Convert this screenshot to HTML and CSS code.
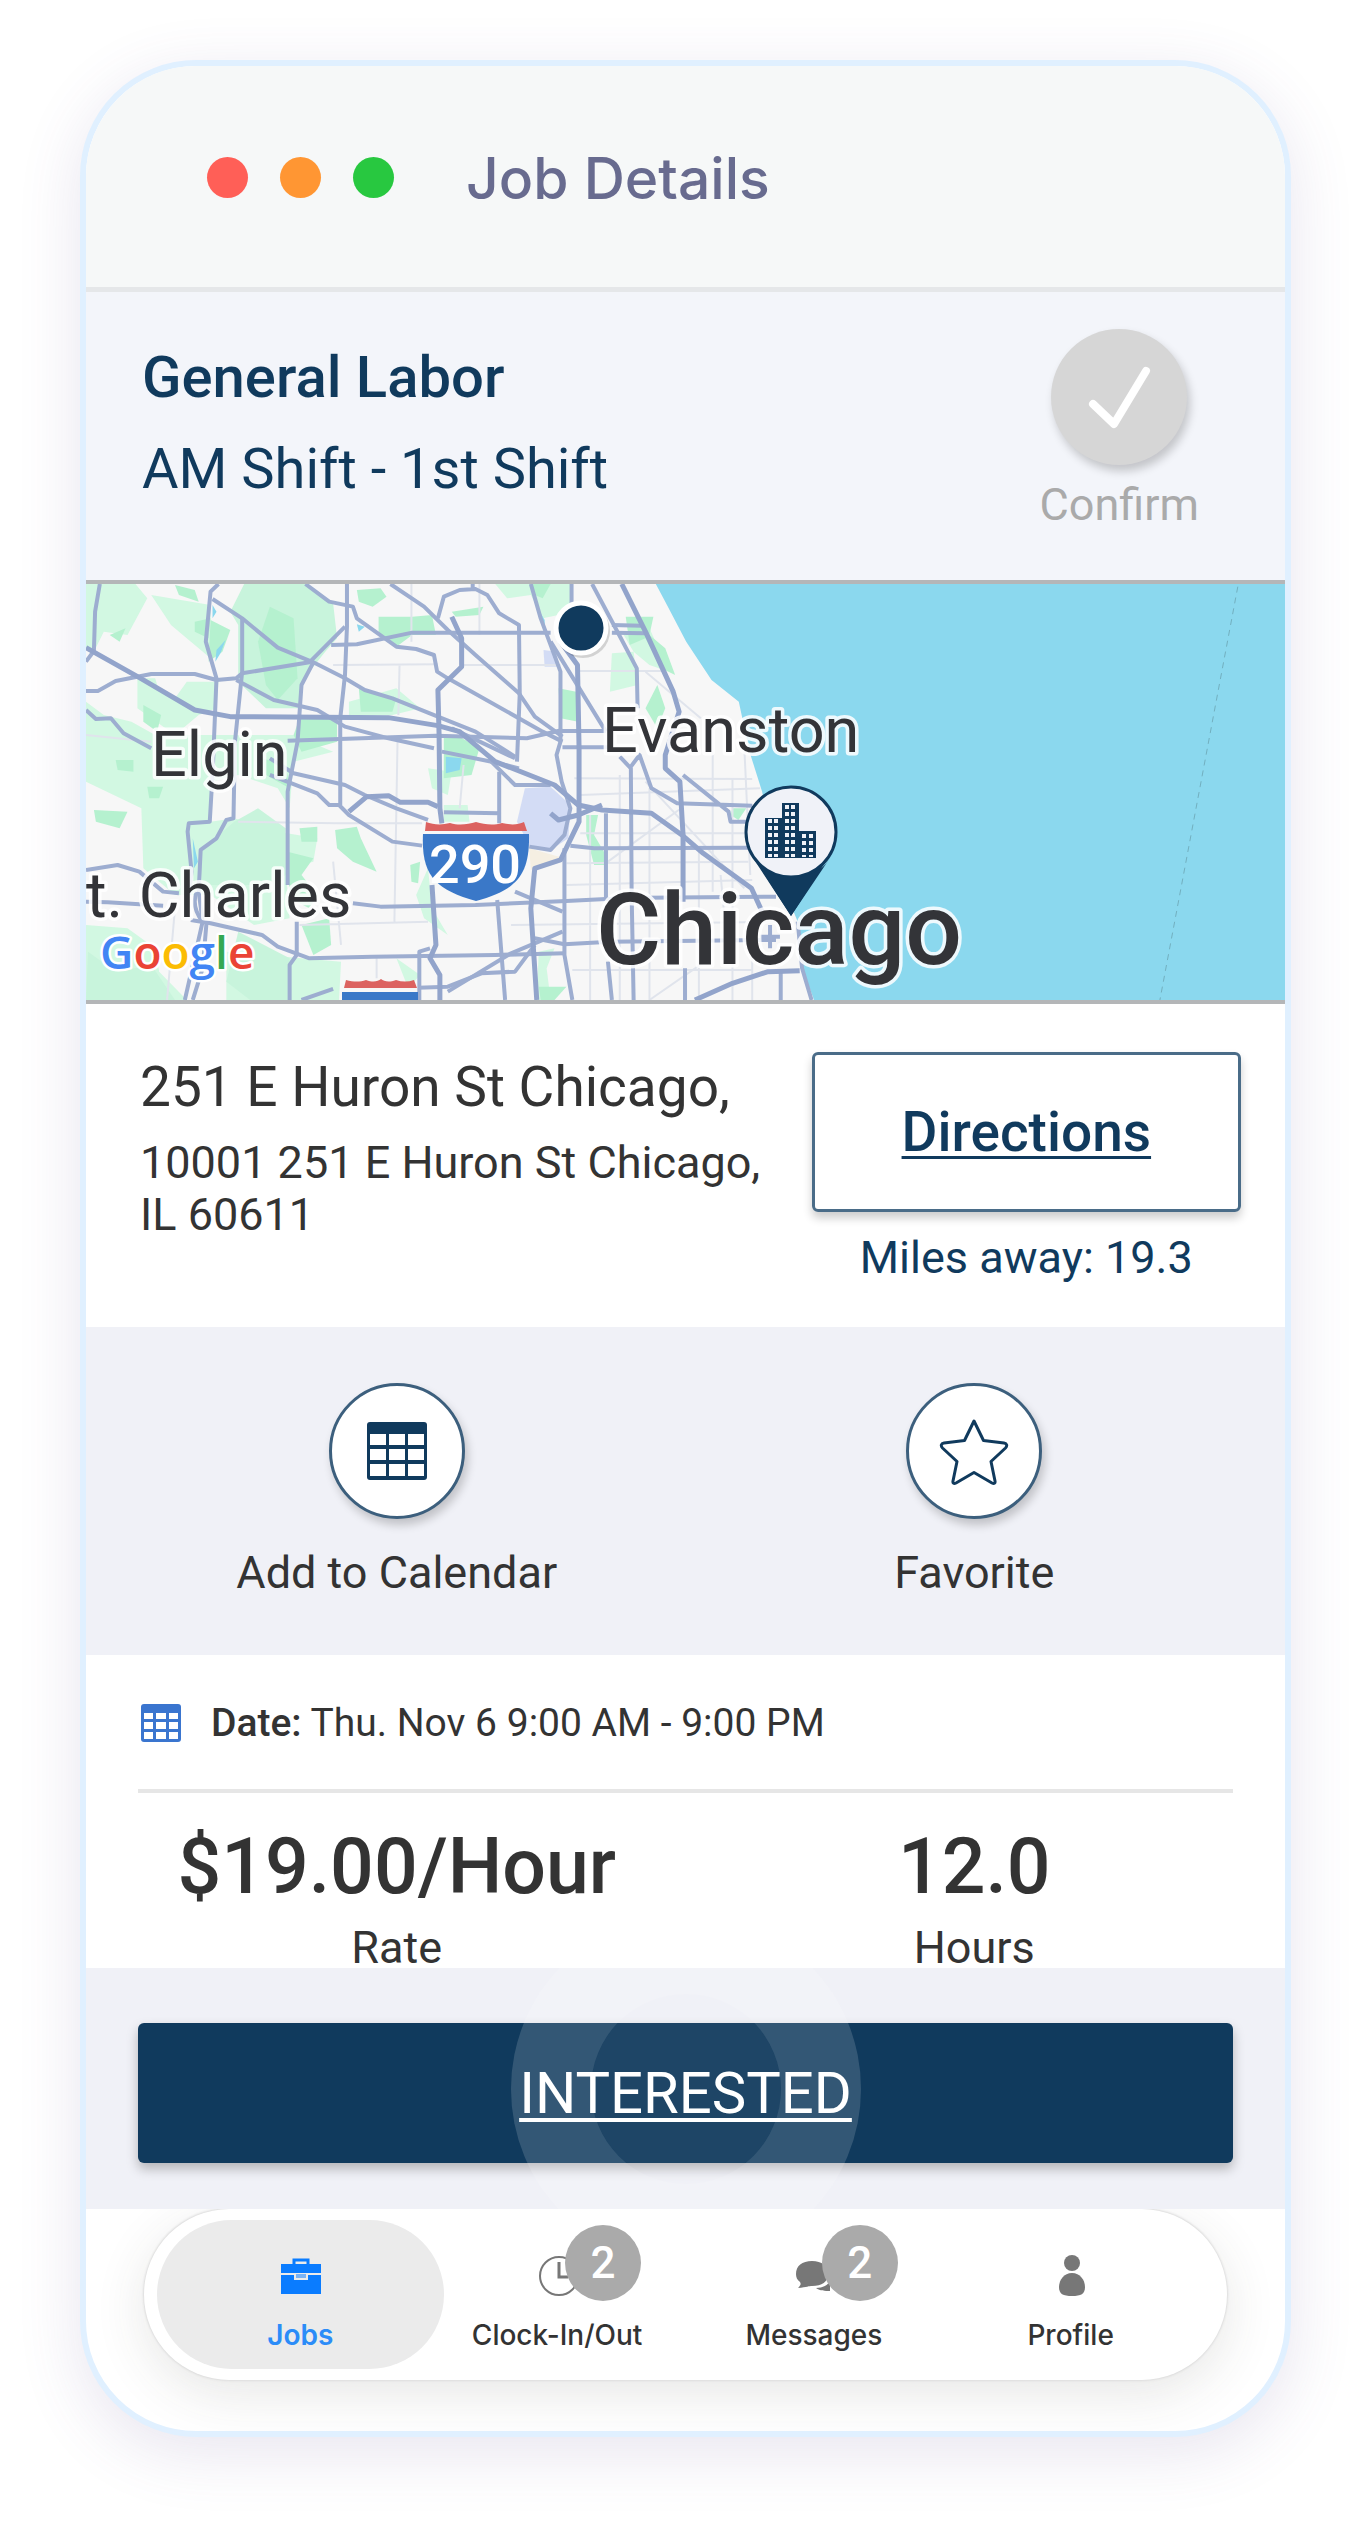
FILE: index.html
```html
<!DOCTYPE html>
<html lang="en">
<head>
    <meta charset="UTF-8">
    <meta name="viewport" content="width=device-width, initial-scale=1.0">
    <title>Job Details</title>
    <link rel="stylesheet" href="styles.css">
</head>
<body>
    <main class="phone">
        <header class="title-bar">
            <div class="dots">
                <span class="dot red"></span>
                <span class="dot orange"></span>
                <span class="dot green"></span>
            </div>
            <h1>Job Details</h1>
        </header>

        <section class="job-header">
            <div class="job-name">
                <h2>General Labor</h2>
                <p>AM Shift - 1st Shift</p>
            </div>
            <button class="round-action confirm">
                <span class="circle">
                    <svg width="136" height="136" viewBox="0 0 136 136"><path d="M42 75L63 95L95 42" fill="none" stroke="#fff" stroke-width="8" stroke-linecap="round" stroke-linejoin="round"/></svg>
                </span>
                <span>Confirm</span>
            </button>
        </section>

        <section class="map">
            <svg viewBox="0 0 1199 416" preserveAspectRatio="xMidYMid slice" role="img" aria-label="Map of Chicago">
                <rect width="1199" height="416" fill="#f7f7f7"/>
                <g class="terrain" transform="scale(0.3954 0.3333) translate(-15 -27)">
                    <!-- parks -->
                    <g fill="#d2f8e2">
                        <path d="M15 27H140L170 70L120 180L60 170L35 230L15 220Z"/>
                        <path d="M180 60L330 90L330 250L230 150Z"/>
                        <path d="M145 310H190L200 350L240 370L270 320L350 320L345 400L300 420L240 480L145 400Z"/>
                        <path d="M15 380L60 420L130 440L190 480H540L640 530L540 560L530 700L500 640L400 600L330 620L330 740L390 730L500 770L600 790L590 860L520 880L530 1030L440 1050L330 960L240 960L160 880L155 700L15 620Z"/>
                        <path d="M15 1050L120 1060L190 1120L200 1190L270 1275H15Z"/>
                        <path d="M370 1130L560 1150L660 1160L655 1275H370Z"/>
                        <path d="M930 1080L870 1030L850 960L880 880L890 1000Z"/>
                        <path d="M1050 27H1240L1250 110L1170 130L1140 60L1080 70Z"/>
                        <path d="M1345 235L1400 230L1410 330L1340 350Z"/>
                        <path d="M920 690H980L985 740H920Z"/>
                        <path d="M1370 170L1440 160L1490 290L1440 270L1400 230Z"/>
                        <path d="M1160 1130L1200 1120L1180 1180L1190 1275H1155Z"/>
                        <path d="M680 380L800 340L860 400L790 420L680 425Z"/>
                        <path d="M800 1150L860 1200L830 1240Z"/>
                        <path d="M880 580L940 590L930 660L890 640Z"/>
                    </g>
                    <g fill="#c8f4dc">
                        <path d="M415 27H570L640 85L650 190L620 230L560 320L555 400L470 400L400 320L400 150L380 110Z"/>
                        <path d="M390 740L450 700L520 760V900L480 930H310L300 830Z"/>
                        <path d="M20 1130L90 1190L180 1170L240 1275H15Z"/>
                        <path d="M400 1070L530 1150L530 1275H430L370 1220Z"/>
                    </g>
                    <g fill="#b5f1cf">
                        <path d="M700 45L760 40L775 65L740 95L705 80Z"/>
                        <path d="M755 125H840L890 120L900 180L840 180L800 215L755 180Z"/>
                        <path d="M330 135L380 165L360 230L325 260Z"/>
                        <path d="M480 95L540 130L550 310L500 375L470 330L450 200Z"/>
                        <path d="M705 340L800 370L790 410H710Z"/>
                        <path d="M555 430H650V500L560 530L540 480Z"/>
                        <path d="M920 485H960L1010 520L990 600L920 610Z"/>
                        <path d="M160 390L205 420L195 470L160 440Z"/>
                        <path d="M90 555H135V590L95 585Z"/>
                        <path d="M170 635H210L200 670H175Z"/>
                        <path d="M35 705L120 710L100 760L40 740Z"/>
                        <path d="M290 140L330 130L325 190L290 170Z"/>
                        <path d="M645 765L700 755L710 790L750 890L690 860L650 820Z"/>
                        <path d="M555 760L600 755V800H560Z"/>
                        <path d="M525 830L590 850L560 900L600 960L580 1000L530 970Z"/>
                        <path d="M560 1050L630 1030L635 1110L590 1140Z"/>
                        <path d="M940 110L1020 95L1010 120L950 125Z"/>
                        <path d="M1140 27H1190L1170 70L1150 60Z"/>
                        <path d="M1280 720H1310L1300 780L1325 830V870H1300L1280 780Z"/>
                        <path d="M1380 125H1450L1440 180L1480 220L1505 300L1470 280L1430 190L1390 210Z"/>
                        <path d="M1460 330L1480 400L1460 460L1430 400Z"/>
                        <path d="M1210 340L1255 350L1260 440L1215 430Z"/>
                        <path d="M1160 1235H1230L1200 1275H1165Z"/>
                        <path d="M835 870L860 860L855 925L838 920Z"/>
                        <path d="M1650 700L1685 700L1665 735L1645 720Z"/>
                        <path d="M460 550L520 570L530 640L470 600Z"/>
                        <path d="M75 180L115 160L100 200Z"/>
                        <path d="M240 30L290 45L300 80L250 60Z"/>
                    </g>
                    <!-- O'Hare and other built areas -->
                    <g fill="#d3dcf5">
                        <path d="M1125 640L1190 635L1240 690L1235 790L1190 825L1136 810L1105 740Z"/>
                        <path d="M1172 225L1205 230L1210 275H1175Z"/>
                    </g>
                    <path d="M1136 820L1225 850L1190 860L1140 885Z" fill="#f5efe2"/>
                    <!-- water -->
                    <g fill="#8bd8ee">
                        <path d="M1453 20L1480 80L1533 200L1597 315L1666 380L1693 530L1725 650L1767 900L1815 1040L1826 1180L1858 1280H3060V20Z"/>
                        <path d="M925 545L965 550L960 585L925 595Z"/>
                        <path d="M335 90L345 110L335 130ZM345 225L368 195L355 235L342 260ZM285 790L298 860L288 880Z"/>
                        <path d="M700 148L720 155L705 170ZM1160 105L1175 135L1175 160Z"/>
                    </g>
                    <!-- streets -->
                    <g class="street">
                        <path d="M838 27V200M808 270L805 420M640 270L905 268M970 270L1215 270M1262 288H1480"/>
                        <path d="M15 480L180 500M400 740L650 745L865 745M803 490L795 1040M555 1050L880 1040M640 860L660 1110"/>
                        <path d="M1265 660L1720 640M1265 775L1700 775M1230 865L1690 860M1230 930L1700 915M1250 610L1700 612"/>
                        <path d="M1090 1050L1800 1040M1245 1185H1700M1290 720V1275M1365 600V1275M1440 640V1275M1600 450V950M1650 610V1275M1680 520L1695 900"/>
                        <path d="M1335 860L1520 700M1430 620L1680 940M1440 1275L1580 1160M1010 27V180M970 570L960 700M240 1000L220 1275"/>
                        <path d="M1565 830V1275M1620 900L1640 1160M1700 1050L1700 1275M750 1150V1210M1430 290L1570 430"/>
                    </g>
                    <!-- highways -->
                    <g class="road">
                        <path d="M50 27L38 110L35 228L15 260"/>
                        <path d="M15 348H45L90 318L180 297H290L345 315L395 310L410 295L580 262L670 155"/>
                        <path d="M350 27L330 50L318 200L345 310L335 600L328 740L275 745L272 770L282 890L275 960"/>
                        <path d="M335 72L410 130L500 218L590 262L670 310L720 345L790 370L905 425L1000 470L1100 545"/>
                        <path d="M410 130V290L390 520V600L388 730L370 735L345 790L305 825L300 950L310 1040L265 1275"/>
                        <path d="M395 315L490 375L600 405L670 455L780 490L895 520M915 530L1060 565L1110 580"/>
                        <path d="M570 27L630 80L690 95L700 130L800 215L850 222L895 240L903 290L930 310L1170 470L1220 500"/>
                        <path d="M785 27L870 95L930 165L1000 240L1110 355L1150 425L1220 485"/>
                        <path d="M635 210L700 208L840 173H1190M1345 173L1430 175M1345 150L1420 152"/>
                        <path d="M905 130L920 65L960 45L1000 42L1030 60L1060 115L1110 150L1112 355L1105 560M993 27V42"/>
                        <path d="M590 262L560 330L550 500L525 650V930M675 27V155L670 300L658 430V690"/>
                        <path d="M525 497L900 482L1130 490L1220 465M15 405L40 432L78 430L110 475L180 520"/>
                        <path d="M480 600L600 655L630 690H655L680 720L790 800L865 812"/>
                        <path d="M480 550L540 595L670 630L720 660L800 700L880 735"/>
                        <path d="M920 712L1060 715M1060 590V745M940 460L1100 550"/>
                        <path d="M15 885L95 870L150 890L210 950L250 955M15 980L70 982L210 992M690 985L760 995L1000 990L1230 978L1330 972L1430 968L1760 965"/>
                        <path d="M280 1035L330 1045L460 1080L500 1115L580 1150L740 1145L1050 1140L1225 1135"/>
                        <path d="M548 1040V1140L530 1170V1275M858 1275V1130L885 1120"/>
                        <path d="M560 1275L640 1242M855 1238L930 1235L1015 1195L1100 1190L1150 1110"/>
                        <path d="M930 1250L1090 1135L1220 1070M1055 975L1075 1275M1100 950L1220 1010"/>
                        <path d="M1150 1090L1225 1108L1340 1100L1760 1095"/>
                        <path d="M1243 27V100M1140 27L1165 130L1215 290V500L1205 540L1218 620L1240 700L1225 780L1190 825L1136 815"/>
                        <path d="M1225 820V1140L1245 1275M1190 200L1330 470M1215 468H1330M1220 517H1335"/>
                        <path d="M1295 27L1350 150L1408 280L1410 400M1365 545L1393 580L1395 960L1400 1275"/>
                        <path d="M1393 575L1415 540L1445 640L1510 685L1700 692M1525 600L1640 710L1645 740H1690"/>
                        <path d="M1240 812L1300 820L1690 818M1330 715V970M1335 1160L1345 1275M1530 1180V1275"/>
                        <path d="M1772 1190V1275M1815 1040L1826 1180L1850 1275M1745 1050V1120M1720 1085H1770M1040 560L1100 630H1190"/>
                        <path d="M320 1040L310 1180L285 1275M295 950C285 980 290 1010 310 1040"/>
                    </g>
                    <g class="road wide">
                        <path d="M15 218L150 308L290 405L380 425L780 428L905 452L960 470L1050 560L1200 630L1260 690L1320 705L1445 715L1522 780L1576 835L1698 940L1725 1010"/>
                        <path d="M940 125L965 190V275L905 345L908 480L910 700L915 745M890 930L900 1110L885 1150L910 1200V1275"/>
                        <path d="M1215 200L1258 270L1262 520V740L1215 855L1150 880L1140 1000L1155 1275"/>
                        <path d="M1370 27L1430 170L1500 350L1515 410L1480 540V580L1517 620L1525 780V980"/>
                        <path d="M680 710L725 665L780 662L810 682H880L905 695M1190 715L1210 735L1260 720L1320 690"/>
                        <path d="M1555 1275L1650 1225L1740 1190L1820 1187"/>
                    </g>
                    <path class="route" d="M2928 35L2731 1275"/>
                </g>

                <!-- interstate shields -->
                <g>
                    <path d="M340 238C348 241 356 241 364 239C374 242 382 240 390 238C398 240 406 242 416 239C424 241 432 241 438 238L441 247H339Z" fill="#dc6260"/>
                    <path d="M337 250H443C444 292 430 306 390 317C350 306 335 292 337 250Z" fill="#3a78c8"/>
                    <path d="M260 396C268 398 274 398 280 396C288 399 292 397 295 395C298 397 302 399 310 396C316 398 322 398 328 396L331 404H258Z" fill="#dc6260"/>
                    <path d="M256 408H332V416H256Z" fill="#3a78c8"/>
                </g>
                <text class="shield-label" x="389" y="299">290</text>

                <g class="here">
                    <circle cx="497" cy="47" r="27" fill="#000" opacity="0.15"/>
                    <circle cx="495" cy="44" r="25" fill="#103a5d" stroke="#fff" stroke-width="5"/>
                </g>

                <g class="pin">
                    <path d="M663 266L705 332L747 266Z" fill="#103a5d"/>
                    <circle cx="705" cy="248" r="45" fill="#f0f2f8" stroke="#103a5d" stroke-width="3"/>
                    <path d="M667 274L705 332L744 274C734 290 720 293 705 293C690 293 677 288 667 274Z" fill="#103a5d"/>
                    <path d="M679 234H696V219H713V247H730V274H679Z" fill="#103a5d"/>
                    <path d="M684 235V273M690 235V273M701 221V273M707 221V273M718 250V273M725 250V273" stroke="#f0f2f8" stroke-width="4" stroke-dasharray="4 3" fill="none"/>
                </g>

                <text class="city" x="65" y="192">Elgin</text>
                <text class="city" x="516" y="168">Evanston</text>
                <text class="city" x="0" y="333">t. Charles</text>
                <text class="city big" x="510" y="380">Chicago</text>
                <text class="google" x="14" y="385"><tspan fill="#4285f4">G</tspan><tspan fill="#ea4335">o</tspan><tspan fill="#fbbc04">o</tspan><tspan fill="#4285f4">g</tspan><tspan fill="#34a853">l</tspan><tspan fill="#ea4335">e</tspan></text>
            </svg>
        </section>

        <section class="address">
            <div class="address-text">
                <h3>251 E Huron St Chicago,</h3>
                <p>10001 251 E Huron St Chicago, IL 60611</p>
            </div>
            <div class="directions">
                <a href="#" class="directions-btn">Directions</a>
                <p>Miles away: 19.3</p>
            </div>
        </section>

        <section class="actions">
            <button class="round-action">
                <span class="circle">
                    <svg width="60" height="58" viewBox="0 0 60 58">
                        <rect width="60" height="58" rx="3" fill="#103a5d"/>
                        <path d="M3 12H19V23H3ZM22 12H38V23H22ZM41 12H57V23H41ZM3 27H19V38H3ZM22 27H38V38H22ZM41 27H57V38H41ZM3 42H19V54H3ZM22 42H38V54H22ZM41 42H57V54H41Z" fill="#fff"/>
                    </svg>
                </span>
                <span>Add to Calendar</span>
            </button>
            <button class="round-action">
                <span class="circle">
                    <svg width="70" height="68" viewBox="0 0 70 68"><path d="M35 4L44.500 23.500L65 26C68 26.500 68.500 29 66.500 31L52 44.500L56 64C56.500 66.500 55 67 53 66L35 55.500L17 66C15 67 13.500 66.500 14 64L18 44.500L3.500 31C1.500 29 2 26.500 5 26L25.500 23.500Z" fill="none" stroke="#103a5d" stroke-width="3" stroke-linejoin="round"/></svg>
                </span>
                <span>Favorite</span>
            </button>
        </section>

        <section class="details">
            <p class="date">
                <svg width="40" height="38" viewBox="0 0 40 38">
                    <rect width="40" height="38" rx="3" fill="#3a75cf"/>
                    <path d="M3 9H12V15H3ZM15 9H25V15H15ZM28 9H37V15H28ZM3 18H12V25H3ZM15 18H25V25H15ZM28 18H37V25H28ZM3 28H12V35H3ZM15 28H25V35H15ZM28 28H37V35H28Z" fill="#fff"/>
                </svg>
                <span><strong>Date:</strong> Thu. Nov 6 9:00 AM - 9:00 PM</span>
            </p>
            <div class="figures">
                <div class="figure">
                    <strong>$19.00/Hour</strong>
                    <span>Rate</span>
                </div>
                <div class="figure">
                    <strong>12.0</strong>
                    <span>Hours</span>
                </div>
            </div>
        </section>

        <section class="cta">
            <button class="interested-btn">INTERESTED</button>
        </section>

        <nav class="tab-bar">
            <a href="#" class="tab active">
                <span class="icon">
                    <svg width="44" height="44" viewBox="0 0 44 44">
                        <path d="M16 10V6H30V10" fill="none" stroke="#0a7cff" stroke-width="3"/>
                        <path d="M3 10H43V19H3ZM3 21H16V26H30V21H43V40H3Z" fill="#0a7cff"/>
                        <path d="M18 20H28V24H18Z" fill="#0a7cff" opacity="0.5"/>
                    </svg>
                </span>
                Jobs
            </a>
            <a href="#" class="tab">
                <span class="icon">
                    <svg width="44" height="44" viewBox="0 0 44 44">
                        <circle cx="24" cy="22" r="19" fill="none" stroke="#777" stroke-width="2"/>
                        <path d="M24 8V23H33" fill="none" stroke="#777" stroke-width="3"/>
                    </svg>
                    <span class="badge">2</span>
                </span>
                Clock-In/Out
            </a>
            <a href="#" class="tab">
                <span class="icon">
                    <svg width="44" height="44" viewBox="0 0 44 44">
                        <path d="M20 7C30 7 36 12 36 20C36 28 30 32 20 32C17 32 15 33 6 34C9 31 9 30 8 28C5 26 4 23 4 20C4 12 10 7 20 7Z" fill="#777"/>
                        <path d="M24 34C31 34 36 31 38 27V37C33 37 28 37 24 34Z" fill="#777"/>
                    </svg>
                    <span class="badge">2</span>
                </span>
                Messages
            </a>
            <a href="#" class="tab">
                <span class="icon">
                    <svg width="44" height="44" viewBox="0 0 44 44">
                        <circle cx="23" cy="9" r="8" fill="#777"/>
                        <path d="M23 19C31 19 36 26 36 33C36 40 32 42 23 42C14 42 10 40 10 33C10 26 15 19 23 19Z" fill="#777"/>
                    </svg>
                </span>
                Profile
            </a>
        </nav>
    </main>
</body>
</html>
```
FILE: styles.css
```css
*,
*::before,
*::after {
    margin: 0;
    padding: 0;
    box-sizing: border-box;
}

body {
    background: #fff;
    color: #333;
    font-family: Roboto, 'Liberation Sans', sans-serif;
}

button {
    border: none;
    background: none;
    color: inherit;
    font-family: inherit;
    cursor: pointer;
}

.phone {
    margin: 60px 80px 100px;
    border: 6px solid #e0f0ff;
    border-radius: 116px;
    background: #fff;
    overflow: hidden;
    box-shadow: 0 16px 64px rgba(90, 70, 140, 0.14);
}

/* Title bar */
.title-bar {
    display: flex;
    align-items: center;
    gap: 72px;
    padding: 80px 121px 79px;
    background: #f6f8f8;
    border-bottom: 5px solid #e5e7e9;
}

.dots {
    display: flex;
    gap: 32px;
}

.dot {
    width: 41px;
    height: 41px;
    border-radius: 50%;
}

.red {
    background: #ff5f57;
}

.orange {
    background: #ff9633;
}

.green {
    background: #28c840;
}

.title-bar h1 {
    padding-top: 4px;
    font-family: Inter, sans-serif;
    font-size: 57px;
    line-height: 58px;
    font-weight: 500;
    color: #686b8f;
}

/* Job header */
.job-header {
    display: flex;
    justify-content: space-between;
    align-items: flex-start;
    padding: 37px 86px 49px 56px;
    background: #f3f5fa;
    color: #103a5d;
}

.job-name {
    padding-top: 16px;
}

.job-name h2,
.job-name p {
    font-size: 58px;
    line-height: 64px;
    font-weight: 500;
}

.job-name h2 {
    margin-bottom: 28px;
}

.job-name p {
    font-size: 56px;
    font-weight: 400;
}

.round-action {
    display: flex;
    flex-direction: column;
    align-items: center;
    gap: 28px;
    font-size: 45px;
    line-height: 52px;
}

.circle {
    display: flex;
    align-items: center;
    justify-content: center;
    width: 136px;
    height: 136px;
    border: 3px solid #3c5f7d;
    border-radius: 50%;
    background: #fff;
    box-shadow: 3px 6px 10px rgba(0, 0, 0, 0.2);
}

.confirm {
    gap: 14px;
    color: #aaa;
}

.confirm .circle {
    border: none;
    background: #d6d6d6;
}

/* Map */
.map {
    border-top: 4px solid #b4b6b8;
    border-bottom: 4px solid #b4b6b8;
}

.map svg {
    display: block;
    width: 100%;
    height: 416px;
}

.street,
.road,
.route {
    fill: none;
    stroke: #e0e4ec;
    stroke-width: 2;
}

.terrain path {
    vector-effect: non-scaling-stroke;
}

.road {
    stroke: #9dadd0;
    stroke-width: 4;
    stroke-linejoin: round;
}

.road.wide {
    stroke: #92a4cb;
    stroke-width: 5;
}

.route {
    stroke: #72afbf;
    stroke-width: 1;
    stroke-dasharray: 6 5;
}

.city {
    font-size: 63px;
    fill: #333438;
    stroke: #fff;
    stroke-width: 7px;
    stroke-opacity: 0.85;
    stroke-linejoin: round;
    paint-order: stroke;
}

.city.big {
    font-size: 100px;
    font-weight: 500;
}

.google {
    font-family: 'Open Sans', sans-serif;
    font-size: 46px;
    font-weight: 600;
    stroke: #fff;
    stroke-width: 5px;
    stroke-linejoin: round;
    paint-order: stroke;
}

.shield-label {
    font-size: 54px;
    font-weight: 500;
    fill: #fff;
    text-anchor: middle;
}

/* Address */
.address {
    display: flex;
    justify-content: space-between;
    gap: 40px;
    padding: 48px 44px 43px 54px;
}

.address-text {
    flex: 1;
    padding-top: 3px;
}

.address-text h3 {
    font-size: 55px;
    line-height: 64px;
    font-weight: 400;
    margin-bottom: 18px;
}

.address-text p,
.directions p {
    font-size: 45px;
    line-height: 52px;
}

.directions {
    width: 39%;
    text-align: center;
    color: #103a5d;
}

.directions-btn {
    display: block;
    margin-bottom: 20px;
    padding: 45px 0;
    border: 3px solid #4a6c88;
    border-radius: 6px;
    font-size: 55px;
    line-height: 64px;
    font-weight: 500;
    color: #103a5d;
    text-underline-offset: 5px;
    text-decoration-thickness: 3px;
    box-shadow: 0 6px 10px rgba(0, 0, 0, 0.2);
}

/* Calendar and favorite */
.actions {
    display: grid;
    grid-template-columns: 1fr 1fr;
    justify-items: center;
    padding: 56px 22px;
    background: #f0f1f7;
}

/* Details */
.details {
    padding: 42px 52px 0;
}

.date {
    display: flex;
    align-items: center;
    gap: 30px;
    padding: 0 3px 40px;
    border-bottom: 4px solid #e6e6e6;
    font-size: 39px;
    line-height: 52px;
}

.date strong {
    font-weight: 500;
}

.figures {
    display: grid;
    grid-template-columns: 1fr 1fr;
    margin: 0 -30px;
    padding-top: 34px;
    text-align: center;
}

.figure {
    display: flex;
    flex-direction: column;
    gap: 21px;
}

.figure strong {
    font-size: 77px;
    line-height: 80px;
    font-weight: 500;
}

.figure span {
    font-size: 45px;
    line-height: 40px;
}

/* Interested button */
.cta {
    position: relative;
    overflow: hidden;
    padding: 55px 52px 46px;
    background: #f0f1f7;
}

/* tap ripple over the button */
.cta::after {
    content: '';
    position: absolute;
    top: 50%;
    left: 50%;
    width: 350px;
    height: 350px;
    border: 80px solid rgba(255, 255, 255, 0.15);
    border-radius: 50%;
    background: rgba(255, 255, 255, 0.06);
    background-clip: padding-box;
    transform: translate(-50%, -50%);
    pointer-events: none;
}

.interested-btn {
    width: 100%;
    padding: 38px 0;
    border-radius: 6px;
    background: #103a5d;
    color: #fff;
    font-size: 58px;
    line-height: 64px;
    text-decoration: underline;
    text-decoration-thickness: 4px;
    text-underline-offset: 5px;
    box-shadow: 0 6px 12px rgba(0, 0, 0, 0.25);
}

/* Tab bar */
.tab-bar {
    display: flex;
    margin: 0 58px 51px;
    padding: 11px 28px;
    border-radius: 86px;
    background: #fff;
    box-shadow: 0 0 2px 1px #ddd, 0 14px 52px rgba(60, 60, 50, 0.12);
}

.tab {
    flex: 1;
    display: flex;
    flex-direction: column;
    align-items: center;
    gap: 19px;
    position: relative;
    padding: 34px 0 16px;
    font-family: Inter, sans-serif;
    font-size: 28px;
    line-height: 36px;
    font-weight: 500;
    color: #333;
    text-decoration: none;
}

.active {
    color: #2b8cf8;
    font-weight: 600;
    z-index: 0;
}

.active::before {
    content: '';
    position: absolute;
    inset: 0 -15px;
    z-index: -1;
    border-radius: 75px;
    background: #ebebeb;
}

.icon {
    position: relative;
    height: 44px;
}

.badge {
    position: absolute;
    left: 30px;
    top: -29px;
    width: 76px;
    border-radius: 50%;
    background: #aaa;
    color: #fff;
    font-family: Roboto, sans-serif;
    font-size: 44px;
    line-height: 76px;
    font-weight: 500;
    text-align: center;
}
```
